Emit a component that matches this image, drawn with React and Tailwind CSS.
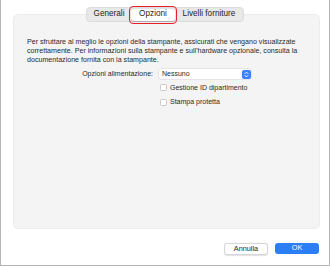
import React from "react";

const font = { fontFamily: '"Liberation Sans", Arial, sans-serif' };

function Stepper() {
  return (
    <span className="flex h-[9px] w-[9px] items-center justify-center rounded-[2px] bg-[#3b82f6]">
      <svg width="5" height="7" viewBox="0 0 5 7" fill="none">
        <path d="M1 2.6 L2.5 1.1 L4 2.6" stroke="white" strokeWidth="0.9" strokeLinecap="round" strokeLinejoin="round" />
        <path d="M1 4.4 L2.5 5.9 L4 4.4" stroke="white" strokeWidth="0.9" strokeLinecap="round" strokeLinejoin="round" />
      </svg>
    </span>
  );
}

function Checkbox({ label }) {
  return (
    <div className="flex items-center gap-[3px]">
      <span className="h-[7px] w-[7px] rounded-[1.5px] border border-[#c9c9c9] bg-white" />
      <span className="text-[7px] text-[#2a2a2a]">{label}</span>
    </div>
  );
}

export default function App() {
  return (
    <div
      className="relative box-border h-[266px] w-[330px] overflow-hidden border-x border-b border-[#b5b5b5] bg-white"
      style={font}
    >
      {/* tabs */}
      <div className="relative z-10 flex justify-center pt-[7px]">
        <div className="flex h-[15px] items-center rounded-[4px] border border-[#dcdcdc] bg-[#e8e8e8] px-[1px] text-[8.2px] text-[#262626]">
          <div className="flex h-full w-[42px] items-center justify-center">Generali</div>
          <div className="relative mx-[1px] flex h-[12px] w-[44px] items-center justify-center rounded-[3px] bg-white shadow-[0_0.5px_1px_rgba(0,0,0,0.25)]">
            Opzioni
            <span className="absolute -inset-x-[2px] -inset-y-[3px] rounded-[4px] border-[1.5px] border-[#e4202a]" />
          </div>
          <div className="flex h-full w-[66px] items-center justify-center">Livelli forniture</div>
        </div>
      </div>

      {/* panel */}
      <div className="mx-[12px] mt-[-8px] box-border h-[215px] w-[307px] rounded-[5px] border border-[#ececec] bg-[#f4f4f4] pt-[23px]">
        <p className="ml-[13px] w-[290px] text-[7.1px] leading-[9px] text-[#2a2a2a]">
          Per sfruttare al meglio le opzioni della stampante, assicurati che vengano visualizzate
          correttamente. Per informazioni sulla stampante e sull'hardware opzionale, consulta la
          documentazione fornita con la stampante.
        </p>

        <div className="mt-[4px] flex items-center">
          <span className="w-[139px] text-right text-[7px] text-[#2a2a2a]">Opzioni alimentazione:</span>
          <div className="ml-[6px] flex h-[10px] w-[92px] items-center justify-between rounded-[2px] bg-white pl-[3px] pr-[0.5px] shadow-[0_0_0_0.5px_rgba(0,0,0,0.12)]">
            <span className="text-[7px] text-[#2a2a2a]">Nessuno</span>
            <Stepper />
          </div>
        </div>

        <div className="ml-[146px] mt-[3px] flex flex-col gap-[4px]">
          <Checkbox label="Gestione ID dipartimento" />
          <Checkbox label="Stampa protetta" />
        </div>
      </div>

      {/* buttons */}
      <div className="mr-[10px] mt-[14px] flex justify-end gap-[7px]">
        <button className="flex h-[12px] w-[44px] items-center justify-center rounded-[3px] border border-[#d6d6d6] bg-white text-[7.3px] text-[#2a2a2a] shadow-[0_0.5px_1px_rgba(0,0,0,0.12)]">
          Annulla
        </button>
        <button className="flex h-[11px] w-[44px] items-center justify-center rounded-[3px] bg-[#2b7ef6] text-[7.3px] text-white">
          OK
        </button>
      </div>
    </div>
  );
}
